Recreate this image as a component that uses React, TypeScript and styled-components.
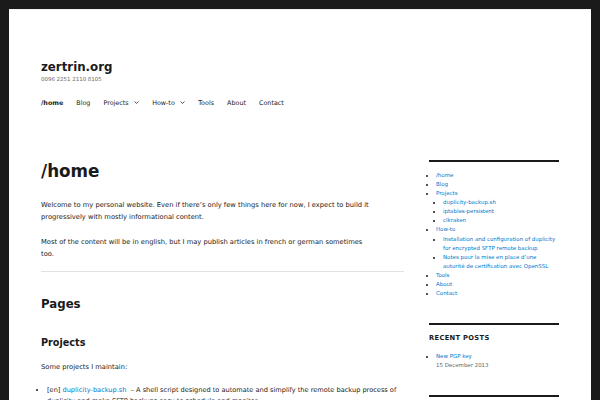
import React from 'react';
import styled, { createGlobalStyle } from 'styled-components';

const GlobalStyle = createGlobalStyle`
  html, body { margin: 0; padding: 0; background: #1a1a1a; }
  body { font-family: "DejaVu Sans", Verdana, sans-serif; color: #1a1a1a; }
  * { box-sizing: border-box; }
`;

const Frame = styled.div`
  padding: 9px 9px 0;
`;

const Page = styled.div`
  background: #fff;
  min-height: 600px;
  padding: 0 32px;
  border-top: 1px solid #f2f2f2;
`;

const Header = styled.header`
  padding-top: 50px;
`;

const SiteTitle = styled.h1`
  margin: 0;
  font-size: 11.8px;
  line-height: 14px;
  font-weight: 700;
`;

const Description = styled.p`
  margin: 1px 0 0;
  font-size: 5.46px;
  line-height: 8px;
  color: #686868;
`;

const Nav = styled.nav`
  display: flex;
  gap: 13px;
  margin-top: 14.8px;
  font-size: 6.4px;
  line-height: 10px;
`;

const NavItem = styled.a<{ $current?: boolean }>`
  display: flex;
  align-items: center;
  gap: 5.5px;
  color: #1a1a1a;
  text-decoration: none;
  font-weight: ${(p) => (p.$current ? 700 : 400)};
`;

const Chevron = styled.svg`
  width: 5px;
  height: 3px;
  display: block;
`;

const Content = styled.div`
  display: grid;
  grid-template-columns: 363px 130px;
  column-gap: 25px;
  align-items: start;
  margin-top: 52.1px;
`;

const Main = styled.main`
  font-size: 6.72px;
  line-height: 11.76px;
`;

const EntryTitle = styled.h1`
  margin: 1.5px 0 0;
  font-size: 16.8px;
  line-height: 20.6px;
  font-weight: 700;
`;

const EntryContent = styled.div`
  margin-right: 30px;
`;

const Para = styled.p<{ $top: number }>`
  margin: ${(p) => p.$top}px 0 0;
`;

const Rule = styled.hr`
  margin: 11px 0 0;
  border: 0;
  border-top: 1px solid #e2e2e2;
  height: 0;
`;

const H2 = styled.h2`
  margin: 24.3px 0 0;
  font-size: 11.76px;
  line-height: 14.7px;
  font-weight: 700;
`;

const H3 = styled.h3`
  margin: 25.1px 0 0;
  font-size: 9.66px;
  line-height: 11.76px;
  font-weight: 700;
`;

const MainList = styled.ul`
  margin: 10.5px 0 0;
  padding-left: 6px;
  list-style: disc outside;
  font-size: 6.6px;
`;

const Link = styled.a`
  color: #007acc;
  text-decoration: none;
`;

const Sidebar = styled.aside`
  display: flex;
  flex-direction: column;
`;

const Widget = styled.section`
  border-top: 2px solid #1a1a1a;
  padding-top: 9px;
  margin-bottom: 24.7px;
  font-size: 5.46px;
  line-height: 9.1px;
`;

const WidgetTitle = styled.h2`
  margin: 0 0 9.5px;
  font-size: 6.72px;
  line-height: 9px;
  font-weight: 700;
  text-transform: uppercase;
  letter-spacing: 0.32px;
`;

const SideList = styled.ul`
  margin: 0;
  padding-left: 7px;
  list-style: disc outside;
`;

const SubList = styled.ul`
  margin: 0;
  padding-left: 7px;
  list-style: disc outside;
`;

const PostDate = styled.span`
  display: block;
  color: #686868;
`;

const Caret = () => (
  <Chevron viewBox="0 0 5 3">
    <path d="M0.6 0.5 L2.5 2.4 L4.4 0.5" fill="none" stroke="#1a1a1a" strokeWidth="0.8" />
  </Chevron>
);

export default function App() {
  return (
    <>
      <GlobalStyle />
      <Frame>
        <Page>
          <Header>
            <SiteTitle>zertrin.org</SiteTitle>
            <Description>0096 2251 2110 8105</Description>
            <Nav>
              <NavItem $current>/home</NavItem>
              <NavItem>Blog</NavItem>
              <NavItem>Projects <Caret /></NavItem>
              <NavItem>How-to <Caret /></NavItem>
              <NavItem>Tools</NavItem>
              <NavItem>About</NavItem>
              <NavItem>Contact</NavItem>
            </Nav>
          </Header>
          <Content>
            <Main>
              <EntryTitle>/home</EntryTitle>
              <EntryContent>
                <Para $top={18.5}>
                  Welcome to my personal website. Even if there’s only few things here for now, I expect to build it progressively with mostly informational content.
                </Para>
                <Para $top={12.9}>
                  Most of the content will be in english, but I may publish articles in french or german sometimes too.
                </Para>
              </EntryContent>
              <Rule />
              <H2>Pages</H2>
              <H3>Projects</H3>
              <Para $top={14}>Some projects I maintain:</Para>
              <MainList>
                <li>
                  [en] <Link>duplicity-backup.sh</Link>{' \u00a0'}– A shell script designed to automate and simplify the remote backup process of duplicity and make SFTP backups easy to schedule and monitor.
                </li>
              </MainList>
            </Main>
            <Sidebar>
              <Widget>
                <SideList>
                  <li><Link>/home</Link></li>
                  <li><Link>Blog</Link></li>
                  <li>
                    <Link>Projects</Link>
                    <SubList>
                      <li><Link>duplicity-backup.sh</Link></li>
                      <li><Link>iptables-persistent</Link></li>
                      <li><Link>clkraken</Link></li>
                    </SubList>
                  </li>
                  <li>
                    <Link>How-to</Link>
                    <SubList>
                      <li><Link>Installation and configuration of duplicity for encrypted SFTP remote backup</Link></li>
                      <li><Link>Notes pour la mise en place d’une autorité de certification avec OpenSSL</Link></li>
                    </SubList>
                  </li>
                  <li><Link>Tools</Link></li>
                  <li><Link>About</Link></li>
                  <li><Link>Contact</Link></li>
                </SideList>
              </Widget>
              <Widget>
                <WidgetTitle>Recent Posts</WidgetTitle>
                <SideList>
                  <li>
                    <Link>New PGP key</Link>
                    <PostDate>15 December 2013</PostDate>
                  </li>
                </SideList>
              </Widget>
              <Widget />
            </Sidebar>
          </Content>
        </Page>
      </Frame>
    </>
  );
}
